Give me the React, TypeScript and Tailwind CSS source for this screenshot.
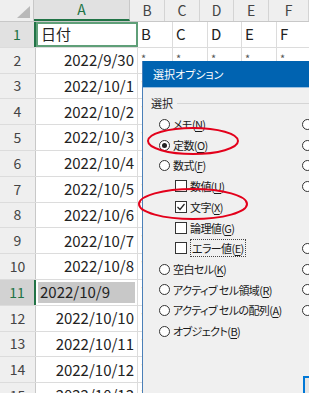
import React from 'react'

const cols = [
  { key: 'B', w: 'w-[35px]' },
  { key: 'C', w: 'w-[35px]' },
  { key: 'D', w: 'w-[34px]' },
  { key: 'E', w: 'w-[35px]' },
  { key: 'F', w: 'w-[40px]' },
]

const dates = [
  '日付',
  '2022/9/30',
  '2022/10/1',
  '2022/10/2',
  '2022/10/3',
  '2022/10/4',
  '2022/10/5',
  '2022/10/6',
  '2022/10/7',
  '2022/10/8',
  '2022/10/9',
  '2022/10/10',
  '2022/10/11',
  '2022/10/12',
  '2022/10/13',
]

type Item = {
  kind: 'radio' | 'check'
  label: string
  key: string
  on?: boolean
  right?: boolean
  focus?: boolean
}

const items: Item[] = [
  { kind: 'radio', label: 'メモ', key: 'N', right: true },
  { kind: 'radio', label: '定数', key: 'O', on: true, right: true },
  { kind: 'radio', label: '数式', key: 'F', right: true },
  { kind: 'check', label: '数値', key: 'U', right: true },
  { kind: 'check', label: '文字', key: 'X', on: true },
  { kind: 'check', label: '論理値', key: 'G' },
  { kind: 'check', label: 'エラー値', key: 'E', right: true, focus: true },
  { kind: 'radio', label: '空白セル', key: 'K', right: true },
  { kind: 'radio', label: 'アクティブ セル領域', key: 'R', right: true },
  { kind: 'radio', label: 'アクティブ セルの配列', key: 'A', right: true },
  { kind: 'radio', label: 'オブジェクト', key: 'B' },
]

function Radio({ on }: { on?: boolean }) {
  return (
    <span className="flex h-[11px] w-[11px] shrink-0 items-center justify-center rounded-full border border-[#333] bg-white">
      {on && <span className="h-[5px] w-[5px] rounded-full bg-[#222]" />}
    </span>
  )
}

function Check({ on }: { on?: boolean }) {
  return (
    <span className="flex h-[12px] w-[12px] shrink-0 items-center justify-center border border-[#333] bg-white">
      {on && (
        <svg width="10" height="10" viewBox="0 0 10 10">
          <polyline points="1.5,5 4,7.5 8.5,2" fill="none" stroke="#222" strokeWidth="1.2" />
        </svg>
      )}
    </span>
  )
}

function Label({ item }: { item: Item }) {
  const text = (
    <>
      {item.label}(<span className="underline underline-offset-2">{item.key}</span>)
    </>
  )
  if (item.focus) {
    return <span className="border border-dotted border-[#444] px-[1px] leading-[15px]">{text}</span>
  }
  return <span>{text}</span>
}

function Dialog() {
  return (
    <div
      className="absolute left-[142px] top-[61px] h-[360px] w-[220px] border-l border-[#4a7fb8] bg-[#f0f0f0] text-[11px] text-[#1a1a1a]"
      style={{ fontFeatureSettings: '"palt"' }}
    >
      <div className="flex h-[26px] items-center bg-[#0063b1] pl-[10px] text-white">選択オプション</div>
      <div className="h-[1px] bg-[#9cc0e0]" />
      <div className="pt-[7px]">
        <div className="flex h-[16px] items-center pl-[8px]">
          <span>選択</span>
          <span className="ml-[4px] h-[1px] flex-1 bg-[#d5d5d5]" />
        </div>
        <div className="mt-[3px] tracking-[-0.6px]">
          {items.map((it) => (
            <div key={it.key} className="flex h-[20.7px] items-center">
              <div className={`flex w-[159px] items-center ${it.kind === 'radio' ? 'pl-[16px]' : 'pl-[32px]'}`}>
                {it.kind === 'radio' ? <Radio on={it.on} /> : <Check on={it.on} />}
                <span className="ml-[3px]">
                  <Label item={it} />
                </span>
              </div>
              {it.right && <Radio />}
            </div>
          ))}
        </div>
        <div className="ml-[160px] mt-[34px] h-[26px] w-[80px] border-2 border-[#0078d7] bg-[#e5e5e5]" />
      </div>
    </div>
  )
}

export default function App() {
  return (
    <div
      className="relative h-[393px] w-[309px] overflow-hidden bg-white text-[#222]"
      style={{ fontFamily: '"Noto Sans CJK JP", "Noto Sans", sans-serif' }}
    >
      {/* column headers */}
      <div className="flex h-[22px] border-b border-[#c8c8c8] bg-[#efefef] text-[14px] text-[#444]">
        <div className="flex w-[36px] items-end justify-end border-r border-[#c8c8c8] pb-[3px] pr-[3px]">
          <svg width="13" height="12" viewBox="0 0 13 12">
            <polygon points="13,0 13,12 0,12" fill="#b9b9b9" />
          </svg>
        </div>
        <div className="flex w-[102px] items-center justify-center border-b-2 border-r border-b-[#217346] border-r-[#c8c8c8] bg-[#e1e1e1] text-[#217346]">
          A
        </div>
        {cols.map((c) => (
          <div key={c.key} className={`flex ${c.w} shrink-0 items-center justify-center border-r border-[#d4d4d4]`}>
            {c.key}
          </div>
        ))}
      </div>

      {/* rows */}
      {dates.map((d, i) => {
        const n = i + 1
        const hl = n === 1 || n === 11
        return (
          <div key={n} className="flex h-[25.8px] border-b border-[#dcdcdc] text-[15px]">
            <div
              className={`flex w-[36px] shrink-0 items-center justify-center text-[14px] ${
                hl
                  ? 'border-r-2 border-[#217346] text-[#217346] ' + (n === 11 ? 'bg-[#d2d2d2]' : 'bg-[#e1e1e1]')
                  : 'border-r border-[#c8c8c8] bg-[#efefef] text-[#444]'
              }`}
            >
              {n}
            </div>
            {n === 1 ? (
              <div className="flex w-[102px] shrink-0 items-center border-2 border-[#5f9f78] pl-[3px]">{d}</div>
            ) : n === 11 ? (
              <div className="flex w-[102px] shrink-0 items-center border-r border-[#dcdcdc] p-[2px]">
                <div className="flex h-full w-full items-center bg-[#c8c8c8] pl-[2px]">{d}</div>
              </div>
            ) : (
              <div className="flex w-[102px] shrink-0 items-center justify-end border-r border-[#dcdcdc] pr-[3px]">{d}</div>
            )}
            {cols.map((c) => (
              <div
                key={c.key}
                className={`flex ${c.w} shrink-0 border-r border-[#dcdcdc] pl-[3px] ${
                  n === 1 ? 'items-center' : 'items-start pt-[2px] text-[11px] text-[#555]'
                }`}
              >
                {n === 1 ? c.key : '*'}
              </div>
            ))}
          </div>
        )
      })}

      <Dialog />

      {/* red annotation ellipses */}
      <svg className="pointer-events-none absolute left-0 top-0" width="309" height="393">
        <ellipse cx="193" cy="141" rx="45" ry="13" fill="none" stroke="#e3001b" strokeWidth="2" />
        <ellipse cx="193" cy="204" rx="54" ry="15" fill="none" stroke="#e3001b" strokeWidth="2" />
      </svg>
    </div>
  )
}
